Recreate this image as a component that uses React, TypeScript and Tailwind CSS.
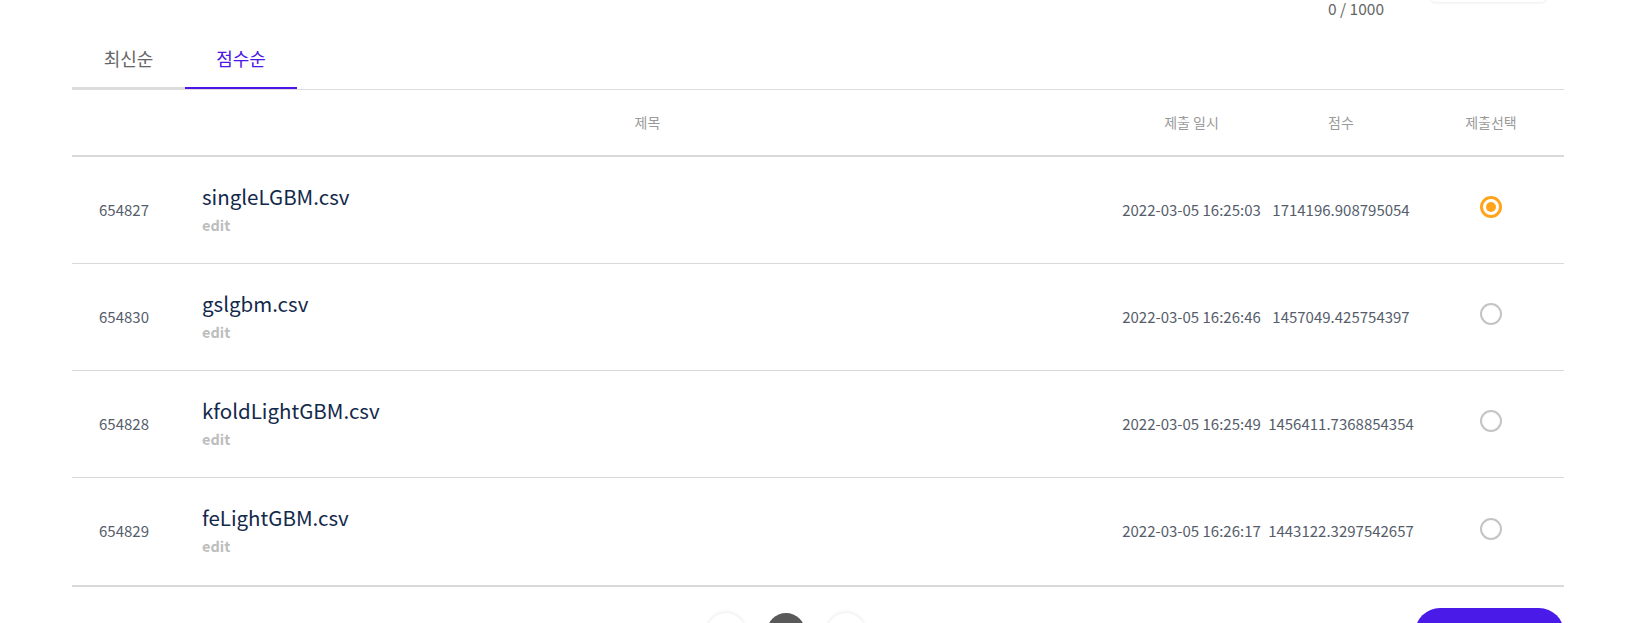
import React from "react";

type Row = { id: string; title: string; date: string; score: string; selected: boolean };

const rows: Row[] = [
  { id: "654827", title: "singleLGBM.csv", date: "2022-03-05 16:25:03", score: "1714196.908795054", selected: true },
  { id: "654830", title: "gslgbm.csv", date: "2022-03-05 16:26:46", score: "1457049.425754397", selected: false },
  { id: "654828", title: "kfoldLightGBM.csv", date: "2022-03-05 16:25:49", score: "1456411.7368854354", selected: false },
  { id: "654829", title: "feLightGBM.csv", date: "2022-03-05 16:26:17", score: "1443122.3297542657", selected: false },
];

const grid = "grid grid-cols-[104px_943px_145px_154px_146px]";

export default function App() {
  return (
    <div
      className="w-[1638px] h-[623px] overflow-hidden bg-white"
      style={{ fontFamily: '"Noto Sans CJK KR", "Noto Sans", sans-serif' }}
    >
      <div className="ml-[72px] w-[1492px]">
        {/* counter row */}
        <div className="flex h-4 items-start">
          <div className="ml-auto mr-[46px] text-[15.5px] leading-4 text-[#666]">0 / 1000</div>
          <div className="-mt-[24px] mr-[17px] h-[26px] w-[117px] rounded-md bg-white shadow-[0_1px_3px_rgba(0,0,0,0.08)]" />
        </div>

        {/* tabs */}
        <div className="mt-[14px] flex border-b border-[#dcdcdc]">
          <div className="w-[113px] border-b-2 border-[#dcdcdc] pt-[15px] pb-[16px] text-center text-[18px] leading-[26px] text-[#666]">
            최신순
          </div>
          <div className="w-[112px] border-b-2 border-[#4a17e8] pt-[15px] pb-[16px] text-center text-[18px] leading-[26px] text-[#4a17e8]">
            점수순
          </div>
        </div>

        {/* header */}
        <div className={`${grid} h-[67px] items-center border-b-2 border-[#d9d9d9] text-[14px] text-[#9a9a9a]`}>
          <div />
          <div className="text-center">제목</div>
          <div className="text-center">제출 일시</div>
          <div className="text-center">점수</div>
          <div className="text-center">제출선택</div>
        </div>

        {/* rows */}
        {rows.map((r, i) => {
          const last = i === rows.length - 1;
          return (
            <div
              key={r.id}
              className={`${grid} items-center border-[#d9d9d9] ${
                last ? "h-[109px] border-b-2" : "h-[107px] border-b"
              }`}
            >
              <div className="text-center text-[15px] text-[#555d6b]">{r.id}</div>
              <div className="mb-[4px] pl-[26px]">
                <div className="text-[20.5px] leading-[28px] text-[#13294b]">{r.title}</div>
                <div className="mt-[5px] text-[14.5px] font-semibold leading-[20px] text-[#bdbdbd]">edit</div>
              </div>
              <div className="text-center text-[15px] whitespace-nowrap text-[#555d6b]">{r.date}</div>
              <div className="text-center text-[15px] whitespace-nowrap text-[#555d6b]">{r.score}</div>
              <div className="-mt-[6px] flex justify-center">
                {r.selected ? (
                  <div className="flex h-[22px] w-[22px] items-center justify-center rounded-full border-[3px] border-[#ffa41b]">
                    <div className="h-[10px] w-[10px] rounded-full bg-[#ffa41b]" />
                  </div>
                ) : (
                  <div className="h-[22px] w-[22px] rounded-full border-2 border-[#c4c4c4]" />
                )}
              </div>
            </div>
          );
        })}

        {/* footer */}
        <div className="mt-[21px] flex items-start">
          <div className="ml-[635px] mt-[5px] flex gap-[22px]">
            <div className="h-[38px] w-[38px] rounded-full bg-white shadow-[0_0_4px_rgba(0,0,0,0.12)]" />
            <div className="h-[38px] w-[38px] rounded-full bg-[#595959]" />
            <div className="h-[38px] w-[38px] rounded-full bg-white shadow-[0_0_4px_rgba(0,0,0,0.12)]" />
          </div>
          <button className="ml-auto flex h-[50px] w-[149px] items-center justify-center rounded-full bg-[#4a1ae8] text-[16px] text-white">
            제출하기
          </button>
        </div>
      </div>
    </div>
  );
}
